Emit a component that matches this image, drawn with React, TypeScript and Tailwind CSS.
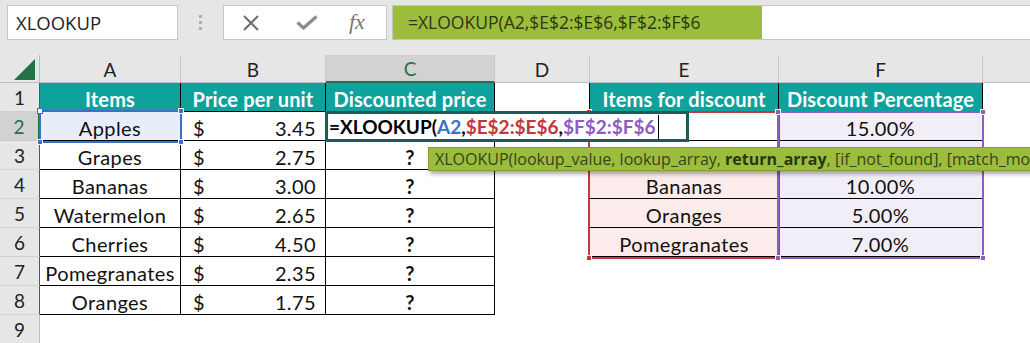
import React from 'react';

const rowsA: [string, string][] = [
  ['Apples', '3.45'],
  ['Grapes', '2.75'],
  ['Bananas', '3.00'],
  ['Watermelon', '2.65'],
  ['Cherries', '4.50'],
  ['Pomegranates', '2.35'],
  ['Oranges', '1.75'],
];

const rowsE: [string, string][] = [
  ['', '15.00%'],
  ['', ''],
  ['Bananas', '10.00%'],
  ['Oranges', '5.00%'],
  ['Pomegranates', '7.00%'],
];

const cell = 'h-[29px] shrink-0 flex items-center pt-[3px]';

function RowHeader({ n, active, last }: { n: number; active?: boolean; last?: boolean }) {
  return (
    <div
      className={
        'w-[40px] h-[29px] shrink-0 flex items-center justify-center pt-[2px] border-b text-[19px] tracking-normal ' +
        (active
          ? 'bg-[#d2d2d2] text-[#217346] border-b-[#c8c8c8] border-r-2 border-r-[#217346]'
          : 'bg-[#e6e6e6] text-[#222] border-b-[#d2d2d2] border-r ' + (last ? 'border-r-[#bdbdbd]' : 'border-r-[#555]'))
      }
    >
      {n}
    </div>
  );
}

function Handle({ className }: { className: string }) {
  return <div className={'absolute w-[6px] h-[6px] ' + className} />;
}

export default function App() {
  return (
    <div className="relative w-[1030px] h-[343px] overflow-hidden bg-white font-['Lato',sans-serif] text-[#111]">
      {/* Formula bar band */}
      <div className="h-[55px] bg-[#e6e6e6] flex items-start pt-[5px] pl-[7px]">
        <div className="w-[171px] h-[35px] bg-white border border-[#c6c6c6] flex items-center pl-[8px] font-['Open_Sans',sans-serif] text-[18.5px] text-[#222]">
          XLOOKUP
        </div>
        <div className="w-[45px] h-[35px] flex flex-col items-center justify-center gap-[3px]">
          <div className="w-[3px] h-[3px] bg-[#adadad]" />
          <div className="w-[3px] h-[3px] bg-[#adadad]" />
          <div className="w-[3px] h-[3px] bg-[#adadad]" />
        </div>
        <div className="w-[164px] h-[35px] bg-white border border-[#c6c6c6] flex items-center">
          <svg width="18" height="16" viewBox="0 0 18 16" className="ml-[18px]">
            <path d="M2 1 L16 15 M16 1 L2 15" stroke="#6e6e6e" strokeWidth="2" fill="none" />
          </svg>
          <svg width="22" height="15" viewBox="0 0 22 15" className="ml-[36px]">
            <path d="M1.5 7.5 L7.5 13 L20.5 1.5" stroke="#8c8c8c" strokeWidth="3.2" fill="none" />
          </svg>
          <span className="ml-[31px] font-['Liberation_Serif',serif] italic text-[22px] text-[#777] leading-none pb-[2px]">fx</span>
        </div>
        <div className="ml-[5px] flex-1 h-[35px] bg-white border-y border-l border-[#c6c6c6] flex">
          <div className="w-[369px] h-full bg-[#9bbc3c] flex items-center pl-[15px] font-['Open_Sans',sans-serif] text-[17.5px] text-[#2c3810]">
            =XLOOKUP(A2,$E$2:$E$6,$F$2:$F$6
          </div>
        </div>
      </div>

      {/* Column headers */}
      <div className="flex h-[28px] text-[19px] text-[#222]">
        <div className="w-[40px] h-[28px] shrink-0 bg-[#e6e6e6] border-r border-b border-[#bdbdbd] flex items-end justify-end pr-[3px] pb-[2px]">
          <svg width="22" height="21" viewBox="0 0 22 21">
            <polygon points="21,0 21,21 0,21" fill="#217346" />
          </svg>
        </div>
        {[
          ['A', 'w-[141px]'],
          ['B', 'w-[145px]'],
          ['C', 'w-[169px]'],
          ['D', 'w-[95px]'],
          ['E', 'w-[189px]'],
          ['F', 'w-[204px]'],
        ].map(([l, w]) => (
          <div
            key={l}
            className={
              w +
              ' h-[28px] shrink-0 flex items-center justify-center pt-[3px] border-r border-r-[#c6c6c6] ' +
              (l === 'C'
                ? 'bg-[#d2d2d2] text-[#217346] border-b-2 border-b-[#217346]'
                : 'bg-[#e6e6e6] border-b border-b-[#bdbdbd]')
            }
          >
            {l}
          </div>
        ))}
        <div className="flex-1 h-[28px] bg-[#e6e6e6] border-b border-b-[#bdbdbd]" />
      </div>

      {/* Row 1 */}
      <div className="flex text-[20px] tracking-[0.15px]">
        <RowHeader n={1} />
        <div className={cell + ' w-[141px] justify-center bg-[#0fa19c] text-white font-bold border-r border-b border-black'}>Items</div>
        <div className={cell + ' w-[145px] justify-center bg-[#0fa19c] text-white font-bold border-r border-b border-black whitespace-nowrap'}>Price per unit</div>
        <div className={cell + ' w-[169px] justify-center bg-[#0fa19c] text-white font-bold border-r border-b border-black whitespace-nowrap'}>Discounted price</div>
        <div className={cell + ' w-[95px] border-r border-black'} />
        <div className={cell + ' w-[189px] justify-center bg-[#0fa19c] text-white font-bold border-r border-b border-black whitespace-nowrap'}>Items for discount</div>
        <div className={cell + ' w-[204px] justify-center bg-[#0fa19c] text-white font-bold border-r border-b border-black whitespace-nowrap'}>Discount Percentage</div>
        <div className={cell + ' flex-1'} />
      </div>

      {/* Rows 2-8 */}
      {rowsA.map(([item, price], i) => {
        const r = i + 2;
        const e = rowsE[i];
        return (
          <div key={r} className="flex text-[20px] tracking-[0.4px]">
            <RowHeader n={r} active={r === 2} />
            <div className={cell + ' w-[141px] justify-center border-r border-b border-black ' + (r === 2 ? 'bg-[#e8eef9]' : '')}>{item}</div>
            <div className={cell + ' w-[145px] justify-between pl-[12px] pr-[9px] border-r border-b border-black'}>
              <span>$</span>
              <span>{price}</span>
            </div>
            <div className={cell + ' w-[169px] justify-center font-bold border-r border-b border-black'}>{r === 2 ? '' : '?'}</div>
            <div className={cell + ' w-[95px] ' + (e ? 'border-r border-black' : '')} />
            {e ? (
              <>
                <div className={cell + ' w-[189px] justify-center border-r border-b border-black ' + (r <= 3 ? 'bg-white' : 'bg-[#fbeceb]')}>{e[0]}</div>
                <div className={cell + ' w-[204px] justify-center bg-[#f1eef8] border-r border-b border-black'}>{e[1]}</div>
              </>
            ) : (
              <>
                <div className={cell + ' w-[189px]'} />
                <div className={cell + ' w-[204px]'} />
              </>
            )}
            <div className={cell + ' flex-1'} />
          </div>
        );
      })}

      {/* Row 9 */}
      <div className="flex">
        <RowHeader n={9} last />
        <div className={cell + ' flex-1'} />
      </div>

      {/* Range highlight: A2 */}
      <div className="absolute left-[39px] top-[110px] w-[143px] h-[33px] border-2 border-[#3d6fc6]" />
      <Handle className="left-[37px] top-[108px] bg-white border border-[#3d6fc6]" />
      <Handle className="left-[178px] top-[108px] bg-[#3d6fc6] border border-white" />
      <Handle className="left-[37px] top-[139px] bg-[#3d6fc6] border border-white" />
      <Handle className="left-[178px] top-[139px] bg-[#3d6fc6] border border-white" />

      {/* Range highlight: E2:E6 */}
      <div className="absolute left-[588px] top-[111px] w-[192px] h-[148px] border-2 border-[#c5393d]" />
      <Handle className="left-[586px] top-[109px] bg-[#c5393d] border border-white" />
      <Handle className="left-[586px] top-[255px] bg-[#c5393d] border border-white" />

      {/* Range highlight: F2:F6 */}
      <div className="absolute left-[777px] top-[111px] w-[207px] h-[148px] border-2 border-[#8d5dc2]" />
      <Handle className="left-[775px] top-[109px] bg-[#8d5dc2] border border-white" />
      <Handle className="left-[980px] top-[109px] bg-[#8d5dc2] border border-white" />
      <Handle className="left-[775px] top-[255px] bg-[#8d5dc2] border border-white" />
      <Handle className="left-[980px] top-[255px] bg-[#8d5dc2] border border-white" />

      {/* In-cell editor */}
      <div className="absolute left-[325px] top-[111px] w-[364px] h-[31px] border-[3px] border-[#1e5b58] bg-white flex items-center pl-[1px] pt-[2px] font-bold text-[19px] text-black whitespace-nowrap">
        <span>=XLOOKUP(</span>
        <span className="text-[#3e6fc6]">A2</span>
        <span>,</span>
        <span className="text-[#c3373c]">$E$2:$E$6</span>
        <span>,</span>
        <span className="text-[#8f5cc3]">$F$2:$F$6</span>
        <span className="ml-[2px] w-px h-[25px] bg-black" />
      </div>

      {/* Function tooltip */}
      <div className="absolute left-[428px] top-[147px] w-[640px] h-[24px] bg-[#9cbc3d] border border-[#82a030] shadow-[2px_3px_4px_rgba(0,0,0,0.35)] flex items-center pl-[6px] font-['Open_Sans',sans-serif] text-[16px] text-[#36441a] whitespace-nowrap">
        XLOOKUP(lookup_value, lookup_array, <b className="font-bold text-[#2a3612]">&nbsp;return_array</b>, [if_not_found], [match_mode], [search_mode])
      </div>
    </div>
  );
}
